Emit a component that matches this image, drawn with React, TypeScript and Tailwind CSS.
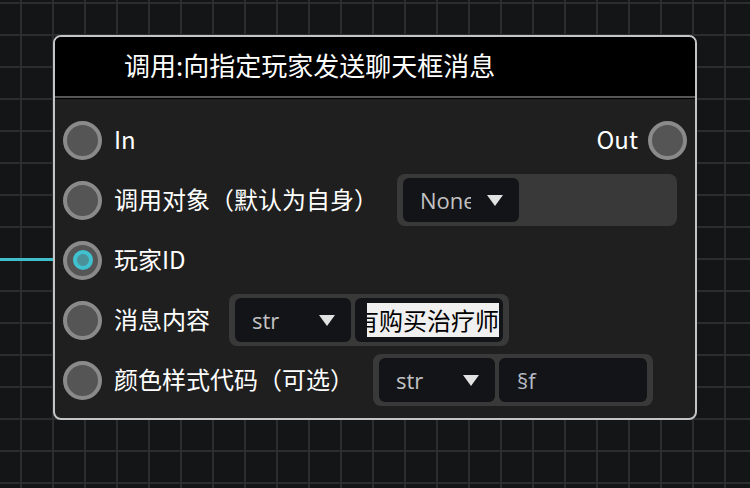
import type { ReactNode } from "react";

const FONT = "font-['Noto_Sans_CJK_SC','Noto_Sans',sans-serif]";
const LATIN = "font-['Open_Sans','Noto_Sans_CJK_SC',sans-serif]";

function Port({ connected = false }: { connected?: boolean }) {
  return (
    <div className="flex h-[39px] w-[39px] shrink-0 items-center justify-center rounded-full border-4 border-[#8a8a8a] bg-[#555555]">
      {connected && (
        <div className="h-[20px] w-[20px] rounded-full border-4 border-[#3fc1cf] bg-[#4b9199]" />
      )}
    </div>
  );
}

function Caret() {
  return (
    <svg width="16" height="11" viewBox="0 0 16 11" className="shrink-0">
      <polygon points="0,0 16,0 8,11" fill="#e2e2e2" />
    </svg>
  );
}

function Select({ value }: { value: string }) {
  return (
    <div className="flex h-[44px] w-[116px] shrink-0 items-center rounded-[6px] bg-[#131417] pl-[17px] pr-[16px]">
      <div className={`w-[51px] overflow-hidden whitespace-nowrap text-[22px] text-[#c2c2c2] ${LATIN}`}>
        {value}
      </div>
      <div className="ml-auto">
        <Caret />
      </div>
    </div>
  );
}

function Widget({ children }: { children: ReactNode }) {
  return (
    <div className="ml-[19px] flex h-[52px] w-[280px] items-center gap-[4px] rounded-[8px] bg-[#393939] pl-[6px] pr-[5px]">
      {children}
    </div>
  );
}

function Row({ children }: { children: ReactNode }) {
  return <div className="flex h-[60px] items-center">{children}</div>;
}

function Label({ text }: { text: string }) {
  return (
    <span className="ml-[12px] whitespace-nowrap pb-[2px] text-[24px] text-white">{text}</span>
  );
}

export default function App() {
  return (
    <div
      className={`relative h-[488px] w-[750px] overflow-hidden bg-[#141517] bg-[linear-gradient(to_right,#2b2d2f_2px,transparent_2px),linear-gradient(to_bottom,#2b2d2f_2px,transparent_2px)] bg-[size:32px_32px] bg-[position:20px_2px] pl-[53px] pt-[35px] ${FONT}`}
    >
      {/* incoming wire */}
      <div className="absolute left-0 top-[258px] h-[3px] w-[55px] bg-[#3fbfcc]" />

      <div className="relative h-[385px] w-[644px] overflow-hidden rounded-[8px] border-2 border-[#c4c4c4] bg-[#1f1f1f]">
        <div className="flex h-[59px] items-center bg-black pb-[5px] pl-[69px] text-[26px] text-white">
          调用:向指定玩家发送聊天框消息
        </div>
        <div className="h-[2px] bg-[#565656]" />
        <div className="h-px bg-black" />

        <div className="px-[8px] pb-[8px] pt-[11px]">
          <Row>
            <Port />
            <Label text="In" />
            <span className="ml-auto mr-[10px] pb-[2px] text-[24px] text-white">Out</span>
            <Port />
          </Row>

          <Row>
            <Port />
            <Label text="调用对象（默认为自身）" />
            <Widget>
              <Select value="None" />
            </Widget>
          </Row>

          <Row>
            <Port connected />
            <Label text="玩家ID" />
          </Row>

          <Row>
            <Port />
            <Label text="消息内容" />
            <Widget>
              <Select value="str" />
              <div className="flex h-[44px] w-[148px] items-center rounded-[6px] bg-[#131417] pl-[12px] pr-[4px]">
                <div className="flex h-[34px] w-[132px] justify-end overflow-hidden bg-[#f0f0f0]">
                  <span className="whitespace-nowrap text-[24px] leading-[34px] text-black">
                    有购买治疗师
                  </span>
                </div>
              </div>
            </Widget>
          </Row>

          <Row>
            <Port />
            <Label text="颜色样式代码（可选）" />
            <Widget>
              <Select value="str" />
              <div
                className={`flex h-[44px] w-[148px] items-center rounded-[6px] bg-[#131417] pl-[18px] text-[22px] text-[#b4bac4] ${LATIN}`}
              >
                §f
              </div>
            </Widget>
          </Row>
        </div>
      </div>
    </div>
  );
}
